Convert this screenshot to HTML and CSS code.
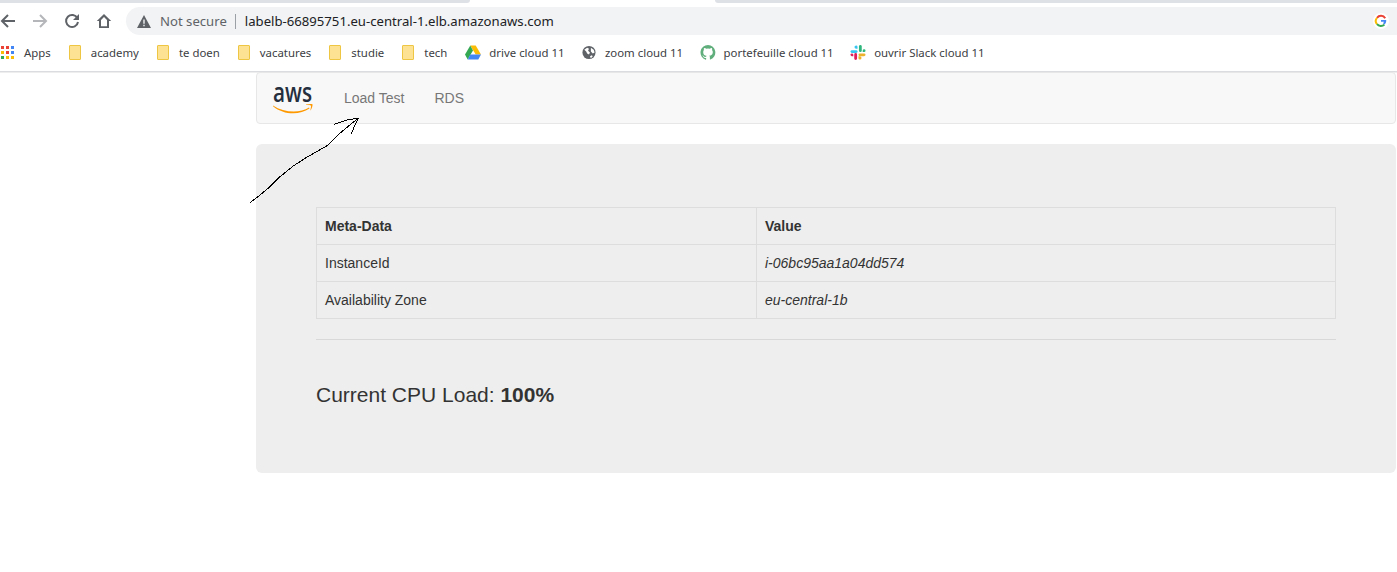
FILE: index.html
```html
<!DOCTYPE html>
<html lang="en">
  <head>
    <meta charset="UTF-8">
    <title>Load Test</title>
    <link rel="stylesheet" href="styles.css">
  </head>
  <body>
    <div class="tabstrip">
      <div class="tab-left"></div>
      <div class="tab-active"></div>
      <div class="tab-right"></div>
    </div>

    <div class="toolbar">
      <div class="nav-icons">
        <svg class="nav-icon" viewBox="0 0 16 16"><path d="M15 8H2M8 2 2 8l6 6" fill="none" stroke="#5f6368" stroke-width="2"/></svg>
        <svg class="nav-icon" viewBox="0 0 16 16"><path d="M1 8h13M8 2l6 6-6 6" fill="none" stroke="#b4b6b9" stroke-width="2"/></svg>
        <svg class="nav-icon" viewBox="0 0 16 16"><path d="M13.4 5.200A6 6 0 1 0 14 9" fill="none" stroke="#5f6368" stroke-width="2"/><path d="M15 1v6H9z" fill="#5f6368"/></svg>
        <svg class="nav-icon" viewBox="0 0 16 16"><path d="M8 1 .8 8H3v7h10V8h2.200zM5 13.200V7l3-3 3 3v6.200z" fill="#5f6368"/></svg>
      </div>
      <div class="omnibox">
        <svg class="warn" viewBox="0 0 14 13"><path d="M7 0 14 13H0z" fill="#5f6368"/><path d="M6.300 4.500h1.400v4.300H6.300zM6.300 9.800h1.400v1.400H6.300z" fill="#f1f3f4"/></svg>
        <span class="not-secure">Not secure</span>
        <span class="url">labelb-66895751.eu-central-1.elb.amazonaws.com</span>
        <svg class="google" viewBox="0 0 16 16">
          <circle cx="8" cy="8" r="8" fill="#fff"/>
          <path d="M12.200 5.200A5 5 0 0 0 4 4.800" fill="none" stroke="#ea4335" stroke-width="2"/>
          <path d="M4 4.800a5 5 0 0 0 0 6.400" fill="none" stroke="#fbbc05" stroke-width="2"/>
          <path d="M4 11.200a5 5 0 0 0 7.400.4" fill="none" stroke="#34a853" stroke-width="2"/>
          <path d="M8 7h5.200v1.500a5 5 0 0 1-1.800 3.100l-1.400-1.300A3 3 0 0 0 11 8.800H8z" fill="#4285f4"/>
        </svg>
      </div>
    </div>

    <div class="bookmarks">
      <div class="bm bm-apps">
        <svg class="apps-icon" viewBox="0 0 13 13">
          <path d="M0 0h3v3H0z" fill="#ea4335"/><path d="M5 0h3v3H5z" fill="#ea4335"/><path d="M10 0h3v3h-3z" fill="#4285f4"/>
          <path d="M0 5h3v3H0z" fill="#fbbc05"/><path d="M5 5h3v3H5z" fill="#ea4335"/><path d="M10 5h3v3h-3z" fill="#4285f4"/>
          <path d="M0 10h3v3H0z" fill="#34a853"/><path d="M5 10h3v3H5z" fill="#fbbc05"/><path d="M10 10h3v3h-3z" fill="#fbbc05"/>
        </svg>
        Apps
      </div>
      <div class="bm"><span class="folder"></span>academy</div>
      <div class="bm"><span class="folder"></span>te doen</div>
      <div class="bm"><span class="folder"></span>vacatures</div>
      <div class="bm"><span class="folder"></span>studie</div>
      <div class="bm"><span class="folder"></span>tech</div>
      <div class="bm bm-cloud">
        <svg class="bm-icon" viewBox="0 0 16 14">
          <path d="M5.300 0h5.400l5.300 9h-5.300z" fill="#fbbc05"/>
          <path d="M5.300 0 0 9l2.700 5 5.300-9z" fill="#34a853"/>
          <path d="M5.300 9H16l-2.700 5H2.700z" fill="#4285f4"/>
        </svg>
        drive cloud 11
      </div>
      <div class="bm bm-cloud">
        <svg class="bm-icon" viewBox="0 0 16 16">
          <circle cx="8" cy="8" r="7" fill="#5f6368"/>
          <path d="M3 5l3-2 2 1-1 2 2 2-1 2-2-1-1-2zM10 3l3 2 1 3-2 1-2-2zM9 12l2-1 1 1-2 2z" fill="#fff"/>
        </svg>
        zoom cloud 11
      </div>
      <div class="bm bm-cloud">
        <svg class="bm-icon" viewBox="0 0 16 16">
          <path d="M8 0a8 8 0 0 0-2.500 15.600c.4.1.5-.2.5-.4v-1.400c-2.200.5-2.700-1-2.700-1-.4-.9-.9-1.200-.9-1.200-.7-.5.1-.5.1-.5.800.1 1.200.8 1.200.8.700 1.200 1.900.9 2.300.7.1-.5.300-.9.500-1.100-1.800-.2-3.600-.9-3.600-4 0-.9.300-1.600.8-2.100-.1-.2-.4-1 .1-2.100 0 0 .7-.2 2.200.8a7.600 7.600 0 0 1 4 0c1.500-1 2.200-.8 2.200-.8.4 1.100.2 1.900.1 2.100.5.600.8 1.300.8 2.100 0 3.100-1.900 3.700-3.700 3.900.3.300.6.800.6 1.500v2.200c0 .2.100.5.600.4A8 8 0 0 0 8 0z" fill="#5fae7b"/>
        </svg>
        portefeuille cloud 11
      </div>
      <div class="bm bm-cloud">
        <svg class="bm-icon" viewBox="0 0 16 16">
          <path d="M1.500 5.500H6a1.500 1.500 0 0 1 0 3H1.500a1.500 1.500 0 0 1 0-3z" fill="#36c5f0"/>
          <path d="M6 .5a1.500 1.500 0 0 1 1.500 1.500v2H6a1.500 1.500 0 0 1 0-3.500z" fill="#36c5f0"/>
          <path d="M9 1.500a1.500 1.500 0 0 1 3 0V6a1.500 1.500 0 0 1-3 0z" fill="#2eb67d"/>
          <path d="M13 6a1.500 1.500 0 1 1 1.500 1.500H13z" fill="#2eb67d"/>
          <path d="M10 9h4.500a1.500 1.500 0 0 1 0 3H10a1.500 1.500 0 0 1 0-3z" fill="#ecb22e"/>
          <path d="M8.500 12H10a1.500 1.500 0 0 1 0 3.500A1.500 1.500 0 0 1 8.500 14z" fill="#ecb22e"/>
          <path d="M5.500 8.500A1.500 1.500 0 0 1 7 10v4.500a1.500 1.500 0 0 1-3 0V10a1.500 1.500 0 0 1 1.500-1.500z" fill="#e01e5a"/>
          <path d="M1.500 9A1.500 1.500 0 0 1 3 10.500V12H1.500a1.500 1.500 0 0 1 0-3z" fill="#e01e5a"/>
        </svg>
        ouvrir Slack cloud 11
      </div>
    </div>

    <div class="page">
      <nav class="navbar">
        <svg class="aws-logo" viewBox="0 0 54 42">
          <text x="0" y="29" class="aws-text" textLength="39" lengthAdjust="spacingAndGlyphs">aws</text>
          <path d="M0 32.500c11 7.500 27 8 36 2l.5 1c-10 7-26 6.500-36.500-2.300z" fill="#f90"/>
          <path d="M33 31.500c2-.5 5-.8 6.500-.3.300 1.500-.7 4.500-2 6.300-.3-.2.700-3.500.5-4.800-1-.6-3.500-.7-5-.6z" fill="#f90"/>
        </svg>
        <a class="nav-link load-test">Load Test</a>
        <a class="nav-link">RDS</a>
      </nav>

      <div class="jumbotron">
        <table class="table">
          <tr>
            <th class="col-meta">Meta-Data</th>
            <th>Value</th>
          </tr>
          <tr>
            <td>InstanceId</td>
            <td><i>i-06bc95aa1a04dd574</i></td>
          </tr>
          <tr>
            <td>Availability Zone</td>
            <td><i>eu-central-1b</i></td>
          </tr>
        </table>
        <hr class="rule">
        <h3 class="cpu">Current CPU Load: <b>100%</b></h3>
      </div>
    </div>

    <!-- hand drawn arrow on top of the screenshot -->
    <svg class="scribble" viewBox="0 0 120 95">
      <path d="M1 85.700 11 78 21 69.700 31 59.700 44.300 49 57.700 40.300 77.700 29 91 16.300 102.700 6.300 109.300 1.300M85.300 7.300 97.700 3 109.300 1.300M102 17.300 106 8 109.300 1.300" fill="none" stroke="#000" stroke-width="1" shape-rendering="crispEdges"/>
    </svg>
  </body>
</html>
```

FILE: styles.css
```css
html, body {
  margin: 0;
  padding: 0;
  background: #fff;
}

body {
  position: relative;
  height: 572px;
  overflow: hidden;
  font-family: "Liberation Sans", Arial, sans-serif;
  color: #333;
}

/* browser chrome */
.tabstrip {
  display: flex;
  height: 3px;
}

.tab-left {
  width: 470px;
  background: #dee1e6;
  border-bottom-right-radius: 4px;
}

.tab-active {
  width: 245px;
}

.tab-right {
  flex: 1;
  background: #dee1e6;
  border-bottom-left-radius: 4px;
}

.toolbar {
  display: flex;
  height: 28px;
  padding-top: 4px;
}

.nav-icons {
  display: flex;
  align-items: center;
  gap: 16px;
  width: 126px;
  flex: none;
}

.nav-icon {
  width: 16px;
  height: 16px;
  flex: none;
}

.omnibox {
  flex: 1;
  display: flex;
  align-items: center;
  background: #f1f3f4;
  border-radius: 14px 0 0 14px;
  padding-left: 11px;
  font-family: "Noto Sans", "Open Sans", sans-serif;
  font-size: 13.150px;
}

.warn {
  width: 14px;
  height: 13px;
  margin-right: 9px;
}

.not-secure {
  color: #5f6368;
  padding-right: 8px;
  border-right: 1px solid #9aa0a6;
  line-height: 15px;
}

.url {
  color: #202124;
  margin-left: 9px;
}

.google {
  width: 16px;
  height: 16px;
  margin-left: auto;
  margin-right: 8px;
}

.bookmarks {
  display: flex;
  align-items: center;
  height: 34px;
  padding-bottom: 2px;
  padding-left: 1px;
  border-bottom: 1px solid #dadce0;
  font-family: "Noto Sans", "Open Sans", sans-serif;
  font-size: 11.400px;
  color: #3c4043;
  box-shadow: 0 1px 0 #eee;
}

.bm {
  display: flex;
  align-items: center;
  margin-right: 18px;
  white-space: nowrap;
}

.bm-cloud {
  margin-right: 16.500px;
}

.apps-icon {
  width: 13px;
  height: 13px;
  margin-right: 10px;
}

.folder {
  width: 10px;
  height: 13px;
  margin-right: 10px;
  background: #fde293;
  border: 1px solid #eec643;
  border-radius: 1px;
}

.bm-icon {
  width: 16px;
  height: 15px;
  margin-right: 8px;
}

/* page content */
.page {
  width: 1140px;
  margin-left: 256px;
}

.navbar {
  display: flex;
  align-items: center;
  height: 50px;
  width: 1122px;
  padding-left: 16px;
  background: #f8f8f8;
  border: 1px solid #e7e7e7;
  border-radius: 4px;
}

.aws-logo {
  align-self: flex-start;
  width: 54px;
  height: 42px;
  margin-right: 17px;
}

.aws-text {
  font-family: "Open Sans", sans-serif;
  font-size: 27px;
  font-weight: 600;
  fill: #252f3e;
}

.nav-link {
  font-size: 14px;
  color: #777;
}

.load-test {
  margin-right: 30px;
}

.jumbotron {
  margin-top: 20px;
  height: 329px;
  padding: 63px 60px 0;
  box-sizing: border-box;
  background: #eee;
  border-radius: 6px;
}

.table {
  width: 100%;
  border-collapse: collapse;
  font-size: 14px;
  line-height: 20px;
}

.table th, .table td {
  padding: 8px;
  border: 1px solid #ddd;
  text-align: left;
}

.col-meta {
  width: 423px;
}

.rule {
  margin: 20px 0 0;
  border: 0;
  border-top: 1px solid #d8d8d8;
}

.cpu {
  margin: 43px 0 0;
  font-size: 21px;
  font-weight: normal;
  line-height: 24px;
}

/* drawn over the nav bar and the panel */
.scribble {
  position: absolute;
  left: 249px;
  top: 117px;
  width: 120px;
  height: 95px;
}
```
